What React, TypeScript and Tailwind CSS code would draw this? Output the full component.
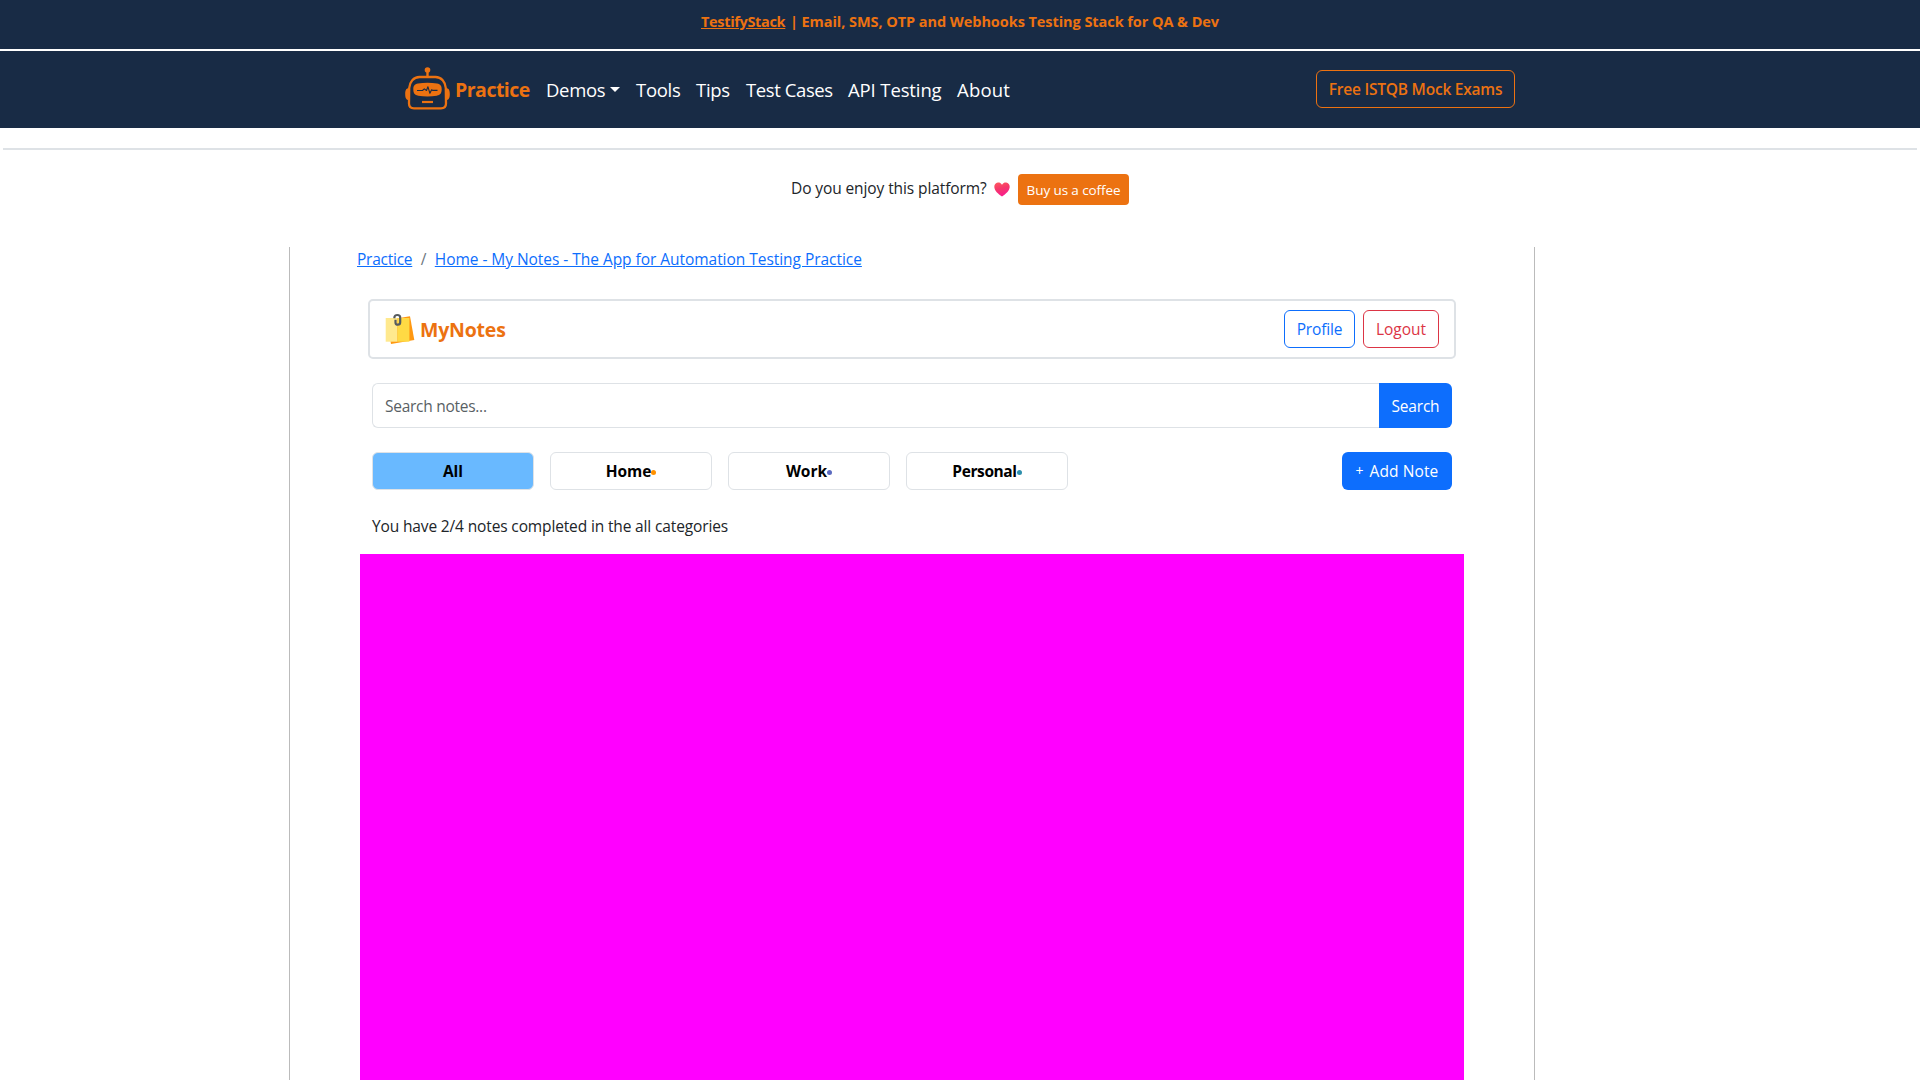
import type { ReactNode } from 'react';

function RobotLogo() {
  return (
    <svg className="-mt-0.5 h-[46px] w-[46px] shrink-0" viewBox="0 0 46 46" fill="none">
      <circle cx="22.5" cy="4" r="2.8" fill="#ec7211" />
      <path d="M22.5 5v6" stroke="#ec7211" strokeWidth="2.4" />
      <path
        d="M14.5 11h16c6 0 9.8 5 10.3 11l.2 15.500c0 3.300-1.700 4.800-5 4.800H9c-3.300 0-5-1.500-5-4.800L4.200 22C4.700 16 8.500 11 14.500 11z"
        stroke="#ec7211"
        strokeWidth="2.300"
      />
      <path d="M4 22C1.200 22.300.2 24 .2 28s1 6 3.800 6.300zM41 22c2.800.3 3.800 2 3.800 6s-1 6-3.800 6.300z" fill="#ec7211" />
      <path
        d="M13 17.500c6-1 13-1 19 0 3.600.6 4.700 2.500 4.700 5.800 0 3.800-1.300 5.800-4.900 6.400-6 .9-12.600.9-18.600 0-3.600-.6-4.900-2.600-4.900-6.400 0-3.300 1.100-5.200 4.700-5.800z"
        fill="#ec7211"
      />
      <path
        d="M12 24.500h5.500l1.800-1.600 2.200 1.600 1.400-3.800 2 6.600 1.700-3.600 1.300.7h4.600"
        stroke="#182b45"
        strokeWidth="1.100"
        strokeLinejoin="round"
      />
      <path d="M17 36h11" stroke="#ec7211" strokeWidth="2.200" />
    </svg>
  );
}

function NotesIcon() {
  return (
    <svg className="h-8 w-[30px] shrink-0" viewBox="0 0 30 32">
      <path d="M1.700 7 25 3.300 29.300 27 6 31z" fill="#ff9811" />
      <path d="M.7 5h11.800v23.700H.7z" fill="#ffe98e" />
      <path d="M12.500 5h11.900v23.700H12.500z" fill="#ffda44" />
      <path
        d="M9.400 5.200V4.300C9.400 2.900 10.800 2 12.300 2s2.900.9 2.900 2.500v4.700c0 1.500-1 2.500-2.300 2.500-1.500 0-2.400-.9-2.400-2.300V6.800"
        fill="none"
        stroke="#565b5e"
        strokeWidth="2.200"
      />
    </svg>
  );
}

function HeartIcon() {
  return (
    <svg className="h-[15px] w-4" viewBox="0 0 16 15">
      <defs>
        <linearGradient id="heart" x1="0" y1="0" x2="0.300" y2="1">
          <stop offset="0" stopColor="#ff5a5f" />
          <stop offset="0.500" stopColor="#f5386a" />
          <stop offset="1" stopColor="#f91e8c" />
        </linearGradient>
      </defs>
      <path
        d="M8 2.800C6.800.9 5.200.4 3.800.6 1.700.9.200 2.700.3 5.100c.2 3.700 3.800 7 7.700 9.300 3.900-2.300 7.500-5.600 7.700-9.300.1-2.400-1.400-4.200-3.500-4.500C10.800.4 9.200.9 8 2.800z"
        fill="url(#heart)"
      />
    </svg>
  );
}

function NavLink({ className, children }: { className: string; children: ReactNode }) {
  return (
    <a href="#" className={`flex items-center whitespace-nowrap text-[18.5px] text-white ${className}`}>
      {children}
    </a>
  );
}

function Category({ label, track, dot, active }: { label: string; track: string; dot?: string; active?: boolean }) {
  return (
    <button
      className={`flex h-[38px] w-[162px] items-center justify-center rounded-md border border-[#dee2e6] font-bold text-black ${active ? 'bg-[#69b9ff]' : 'bg-white'}`}
    >
      <span className={track}>{label}</span>
      {dot && <span className={`mt-0.5 size-[5px] rounded-full ${dot}`} />}
    </button>
  );
}

export default function App() {
  return (
    <div className="flex h-[1080px] w-[1920px] flex-col overflow-hidden bg-white font-['Open_Sans',sans-serif] text-[15.5px] leading-6 text-[#212529]">
      <div className="flex h-[49px] shrink-0 justify-center bg-[#182b45] pt-2.5 text-[14.5px] font-bold text-[#ec7211]">
        <p className="flex w-[518px] justify-between whitespace-nowrap">
          <a href="#" className="tracking-[-0.33px] underline">TestifyStack</a>
          <span className="tracking-[-0.06px]">| Email, SMS, OTP and Webhooks Testing Stack for QA &amp; Dev</span>
        </p>
      </div>

      <nav className="mt-0.5 flex h-[77px] shrink-0 items-center bg-[#182b45] pl-[405px] pr-[405px]">
        <a href="#" className="flex w-[141px] items-center gap-1">
          <RobotLogo />
          <span className="text-[19.5px] font-bold tracking-[-0.5px] text-[#ec7211]">Practice</span>
        </a>
        <NavLink className="w-[90px] tracking-[-0.3px]">
          Demos
          <span className="ml-[5px] border-x-[5px] border-t-[5px] border-x-transparent border-t-white" />
        </NavLink>
        <NavLink className="w-[60px] tracking-[-0.3px]">Tools</NavLink>
        <NavLink className="w-[50px] tracking-[-0.3px]">Tips</NavLink>
        <NavLink className="w-[102px] tracking-[-0.4px]">Test Cases</NavLink>
        <NavLink className="w-[109px] tracking-[-0.12px]">API Testing</NavLink>
        <NavLink className="tracking-[0.2px]">About</NavLink>
        <a
          href="#"
          className="-mt-px ml-auto flex h-[38px] w-[199px] items-center justify-center whitespace-nowrap rounded-md border border-[#ec7211] font-semibold tracking-[-0.22px] text-[#ec7211]"
        >
          Free ISTQB Mock Exams
        </a>
      </nav>

      <div className="mx-[3px] mt-5 h-0.5 shrink-0 bg-[#dee2e6]" />

      <div className="mt-6 flex h-[31px] shrink-0 items-center pl-[791px]">
        <span className="-mt-[3px] w-[203px] whitespace-nowrap tracking-[-0.1px]">Do you enjoy this platform?</span>
        <HeartIcon />
        <a
          href="#"
          className="ml-2 flex h-[31px] w-[111px] items-center justify-center whitespace-nowrap rounded bg-[#ec7211] text-[13.5px] tracking-[-0.1px] text-white"
        >
          Buy us a coffee
        </a>
      </div>

      <main className="ml-[289px] mt-[42px] flex w-[1246px] grow flex-col border-x border-[#bbbbbb] pl-[70px] pr-[70px]">
        <div className="flex whitespace-nowrap text-[#0d6efd]">
          <a href="#" className="-ml-[3px] tracking-[-0.25px] underline">Practice</a>
          <span className="w-[22.5px] text-center text-[#6c757d]">/</span>
          <a href="#" className="tracking-[-0.04px] underline">Home - My Notes - The App for Automation Testing Practice</a>
        </div>

        <header className="mx-2 mt-7 flex h-[60px] shrink-0 items-center rounded-[5px] border-2 border-[#dee2e6] px-[15px]">
          <NotesIcon />
          <span className="ml-[5px] mt-px text-[19.5px] font-bold tracking-[-0.2px] text-[#ec7211]">MyNotes</span>
          <button className="ml-auto h-[38px] w-[71px] rounded-md border border-[#0d6efd] tracking-[-0.15px] text-[#0d6efd]">
            Profile
          </button>
          <button className="ml-2 h-[38px] w-[76px] rounded-md border border-[#dc3545] text-[#dc3545]">Logout</button>
        </header>

        <form className="mx-3 mt-6 flex h-[45px] shrink-0">
          <div className="flex grow items-center rounded-l-md border border-r-0 border-[#dee2e6] pl-3 tracking-[-0.27px] text-[#595f64]">
            Search notes...
          </div>
          <button type="button" className="w-[73px] rounded-r-md bg-[#0d6efd] tracking-[-0.2px] text-white">
            Search
          </button>
        </form>

        <div className="mx-3 mt-6 flex shrink-0 gap-4">
          <Category label="All" track="" active />
          <Category label="Home" track="tracking-[-0.1px]" dot="bg-[#ff9100]" />
          <Category label="Work" track="" dot="bg-[#5c6bc0]" />
          <Category label="Personal" track="tracking-[-0.4px]" dot="bg-[#2e8fac]" />
          <button className="ml-auto flex h-[38px] w-[110px] items-center justify-center gap-1.5 rounded-md bg-[#0d6efd] text-white">
            <span className="text-sm">+</span>
            <span className="tracking-[0.1px]">Add Note</span>
          </button>
        </div>

        <p className="mx-3 mt-6 shrink-0 tracking-[-0.14px]">You have 2/4 notes completed in the all categories</p>

        <section className="mt-4 grow bg-[#ff00ff]" />
      </main>
    </div>
  );
}
